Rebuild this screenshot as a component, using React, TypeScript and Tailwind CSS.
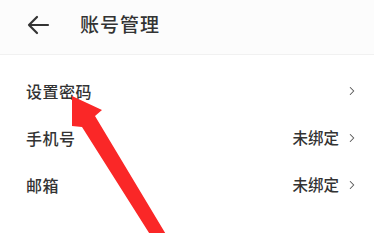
import { ChevronRight } from "lucide-react";

const rows = [
  { label: "设置密码", value: "" },
  { label: "手机号", value: "未绑定" },
  { label: "邮箱", value: "未绑定" },
];

function App() {
  return (
    <div
      className="relative w-[374px] h-[233px] overflow-hidden bg-white text-[#333]"
      style={{ fontFamily: '"Noto Sans CJK SC", "Noto Sans", sans-serif' }}
    >
      {/* header */}
      <div className="flex items-center h-[55px] bg-[#fcfcfc] border-b border-[#f1f1f1]">
        <svg className="ml-[26px] mt-[-5px]" width="24" height="20" viewBox="0 0 24 20" fill="none">
          <path d="M22 10H3M11 2L3 10l8 8" stroke="#333" strokeWidth="2.2" strokeLinecap="round" strokeLinejoin="round" />
        </svg>
        <span className="ml-[30px] mt-[-5px] text-[19px] font-medium tracking-[1px]">账号管理</span>
      </div>

      {/* list */}
      <div className="flex flex-col pt-[12px]">
        {rows.map((r) => (
          <div key={r.label} className="flex items-center h-[47px] pl-[26px] pr-[15px]">
            <span className="flex-1 text-[16px] font-medium tracking-[0.5px]">{r.label}</span>
            {r.value && <span className="text-[15.5px] font-medium text-[#333] mr-[6px]">{r.value}</span>}
            <ChevronRight size={14} strokeWidth={1.8} className="text-[#555]" />
          </div>
        ))}
      </div>

      {/* red annotation arrow */}
      <svg className="absolute left-0 top-0 pointer-events-none" width="374" height="233" viewBox="0 0 374 233">
        <polygon
          points="72,96 102,110 95,116 167,236 151,236 82,127 72,126"
          fill="#fa2727"
        />
      </svg>
    </div>
  );
}

export default App;
